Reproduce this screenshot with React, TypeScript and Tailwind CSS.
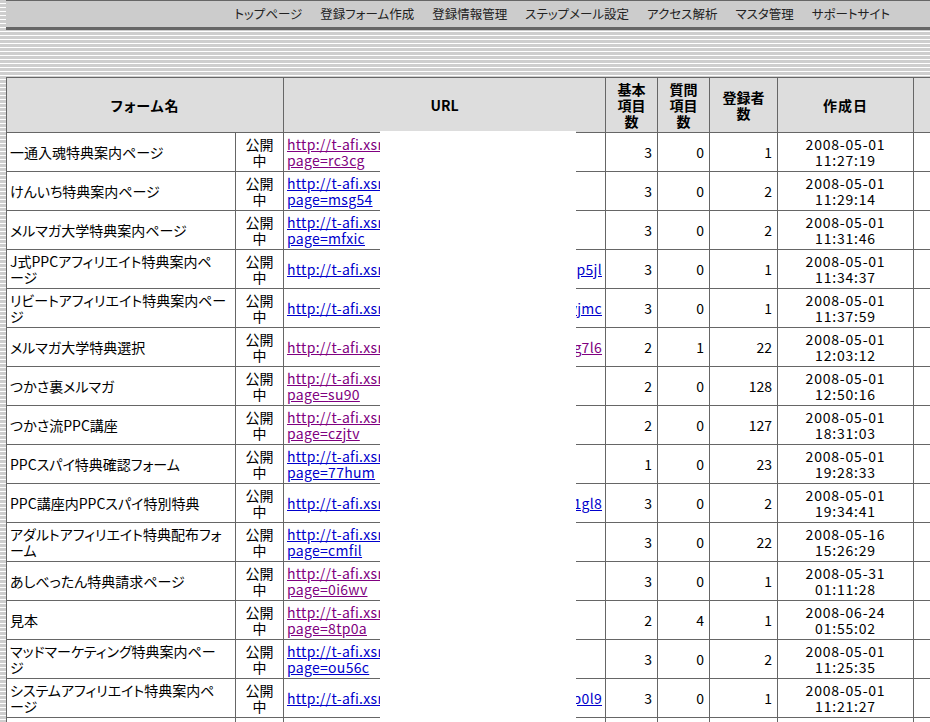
import React from 'react';

interface Row {
  name: string[];
  visited: boolean;
  page?: string;
  tail?: string;
  basic: number;
  question: number;
  users: number;
  date: string;
  time: string;
}

const rows: Row[] = [
  { name: ['一通入魂特典案内ページ'], visited: true, page: 'rc3cg', basic: 3, question: 0, users: 1, date: '2008-05-01', time: '11:27:19' },
  { name: ['けんいち特典案内ページ'], visited: false, page: 'msg54', basic: 3, question: 0, users: 2, date: '2008-05-01', time: '11:29:14' },
  { name: ['メルマガ大学特典案内ページ'], visited: false, page: 'mfxic', basic: 3, question: 0, users: 2, date: '2008-05-01', time: '11:31:46' },
  { name: ['J式PPCアフィリエイト特典案内ペ', 'ージ'], visited: false, tail: '5p5jl', basic: 3, question: 0, users: 1, date: '2008-05-01', time: '11:34:37' },
  { name: ['リビートアフィリエイト特典案内ペー', 'ジ'], visited: false, tail: 'vjmc', basic: 3, question: 0, users: 1, date: '2008-05-01', time: '11:37:59' },
  { name: ['メルマガ大学特典選択'], visited: true, tail: 'g7l6', basic: 2, question: 1, users: 22, date: '2008-05-01', time: '12:03:12' },
  { name: ['つかさ裏メルマガ'], visited: true, page: 'su90', basic: 2, question: 0, users: 128, date: '2008-05-01', time: '12:50:16' },
  { name: ['つかさ流PPC講座'], visited: true, page: 'czjtv', basic: 2, question: 0, users: 127, date: '2008-05-01', time: '18:31:03' },
  { name: ['PPCスパイ特典確認フォーム'], visited: false, page: '77hum', basic: 1, question: 0, users: 23, date: '2008-05-01', time: '19:28:33' },
  { name: ['PPC講座内PPCスパイ特別特典'], visited: false, tail: '1gl8', basic: 3, question: 0, users: 2, date: '2008-05-01', time: '19:34:41' },
  { name: ['アダルトアフィリエイト特典配布フォ', 'ーム'], visited: false, page: 'cmfil', basic: 3, question: 0, users: 22, date: '2008-05-16', time: '15:26:29' },
  { name: ['あしべったん特典請求ページ'], visited: true, page: '0i6wv', basic: 3, question: 0, users: 1, date: '2008-05-31', time: '01:11:28' },
  { name: ['見本'], visited: true, page: '8tp0a', basic: 2, question: 4, users: 1, date: '2008-06-24', time: '01:55:02' },
  { name: ['マッドマーケティング特典案内ペー', 'ジ'], visited: false, page: 'ou56c', basic: 3, question: 0, users: 2, date: '2008-05-01', time: '11:25:35' },
  { name: ['システムアフィリエイト特典案内ペ', 'ージ'], visited: false, tail: 'p0l9', basic: 3, question: 0, users: 1, date: '2008-05-01', time: '11:21:27' },
];

const navItems = ['トップページ', '登録フォーム作成', '登録情報管理', 'ステップメール設定', 'アクセス解析', 'マスタ管理', 'サポートサイト'];

const cell = 'border border-[#666666] align-middle';

export default function App() {
  return (
    <div
      className="h-screen overflow-hidden pl-[6px] text-black [font-feature-settings:'palt'] bg-[repeating-linear-gradient(to_bottom,#cecece_0px,#cecece_3px,#ffffff_3px,#ffffff_4px)]"
      style={{ fontFamily: '"Noto Sans CJK JP", "Liberation Sans", sans-serif' }}
    >
      {/* Menu bar */}
      <div className="h-[30px] border-t border-b-[3px] border-[#666666] bg-[#cccccc] flex items-center justify-end pr-[40px] gap-[18px] text-[12.5px] text-[#222]">
        {navItems.map((item) => (
          <span key={item}>{item}</span>
        ))}
      </div>

      <div className="h-[47px]" />

      {/* Form list */}
      <div className="relative">
        <table className="border-collapse table-fixed w-[1000px] bg-white text-[14px] leading-[16px]">
          <colgroup>
            <col className="w-[229px]" />
            <col className="w-[48px]" />
            <col className="w-[322px]" />
            <col className="w-[52px]" />
            <col className="w-[52px]" />
            <col className="w-[68px]" />
            <col className="w-[136px]" />
            <col className="w-[93px]" />
          </colgroup>
          <thead>
            <tr className="h-[55px] bg-[#dddddd] font-bold">
              <th colSpan={2} className={`${cell} tracking-[1px]`}>フォーム名</th>
              <th className={cell}>URL</th>
              <th className={cell}>基本<br />項目<br />数</th>
              <th className={cell}>質問<br />項目<br />数</th>
              <th className={cell}>登録者<br />数</th>
              <th className={`${cell} tracking-[1px]`}>作成日</th>
              <th className={cell}></th>
            </tr>
          </thead>
          <tbody>
            {rows.map((r, i) => {
              const link = r.visited ? 'text-[#800080]' : 'text-[#0000cc]';
              return (
                <tr key={i} className="h-[39px]">
                  <td className={`${cell} px-[3px] whitespace-nowrap overflow-hidden`}>
                    {r.name.map((n, j) => (
                      <div key={j}>{n}</div>
                    ))}
                  </td>
                  <td className={`${cell} text-center`}>
                    <div>公開</div>
                    <div>中</div>
                  </td>
                  <td className={`${cell} px-[3px]`}>
                    {r.page ? (
                      <div className={`${link} underline whitespace-nowrap tracking-[0.3px]`}>
                        <div>http://t-afi.xsrv.jp/form/?</div>
                        <div>page={r.page}</div>
                      </div>
                    ) : (
                      <div className={`${link} underline flex justify-between whitespace-nowrap tracking-[0.3px]`}>
                        <span>http://t-afi.xsrv.jp/form/</span>
                        <span>{r.tail}</span>
                      </div>
                    )}
                  </td>
                  <td className={`${cell} text-right pr-[5px]`}>{r.basic}</td>
                  <td className={`${cell} text-right pr-[5px]`}>{r.question}</td>
                  <td className={`${cell} text-right pr-[5px]`}>{r.users}</td>
                  <td className={`${cell} text-center tracking-[0.8px]`}>{r.date}<br />{r.time}</td>
                  <td className={cell}></td>
                </tr>
              );
            })}
            <tr className="h-[39px]">
              <td className={cell}></td>
              <td className={cell}></td>
              <td className={cell}></td>
              <td className={cell}></td>
              <td className={cell}></td>
              <td className={cell}></td>
              <td className={cell}></td>
              <td className={cell}></td>
            </tr>
          </tbody>
        </table>
        {/* redacted part of the URLs */}
        <div className="absolute left-[374px] top-[54px] w-[196px] h-[700px] bg-white" />
      </div>
    </div>
  );
}
